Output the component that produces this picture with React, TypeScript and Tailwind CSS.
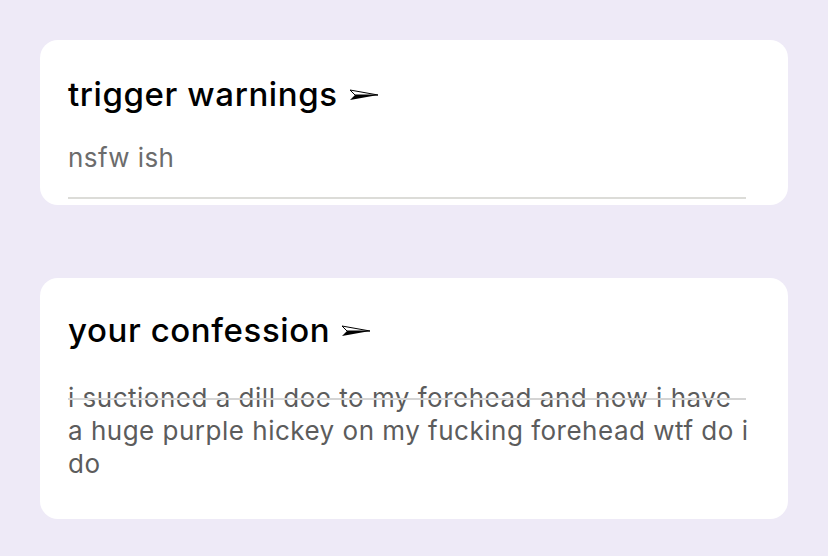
const Arrow = () => (
  <svg className="ml-[11px] mt-[2px]" width="30" height="12" viewBox="0 0 30 12" fill="none">
    <path d="M1 1 L29 6 L6 6 Z" stroke="#000" strokeWidth="1" strokeLinejoin="miter" fill="none" />
    <path d="M6 6 L29 6 L1 11 Z" fill="#000" />
  </svg>
);

export default function App() {
  return (
    <div className="min-h-[556px] w-[828px] bg-[#eeeaf7] px-10 pt-10 font-['Inter',sans-serif]">
      <div className="flex flex-col gap-[73px]">
        <div className="h-[165px] rounded-[18px] bg-white pl-[28px] pr-[42px] pt-[32px]">
          <h2 className="flex items-center text-[33px] font-medium leading-[44px] tracking-[0.6px] text-black">
            trigger warnings
            <Arrow />
          </h2>
          <p className="mt-[25px] text-[26px] leading-[34px] tracking-[0.4px] text-[#6c6c6c]">nsfw ish</p>
          <div className="mt-[22px] h-[2px] bg-[#dcdcd8]" />
        </div>

        <div className="relative h-[241px] rounded-[18px] bg-white pl-[28px] pr-[42px] pt-[30px]">
          <h2 className="flex items-center text-[33px] font-medium leading-[44px] tracking-[0.6px] text-black">
            your confession
            <Arrow />
          </h2>
          <div className="relative mt-[29px]">
            <p className="w-[684px] text-[26px] leading-[33px] tracking-[0.5px] text-[#5c5c5c]">
              i suctioned a dill doe to my forehead and now i have a huge purple hickey on my fucking forehead wtf do i do
            </p>
            <div className="absolute left-0 right-0 top-[17px] h-[2px] bg-[#d4d4d4]" />
          </div>
        </div>
      </div>
    </div>
  );
}
